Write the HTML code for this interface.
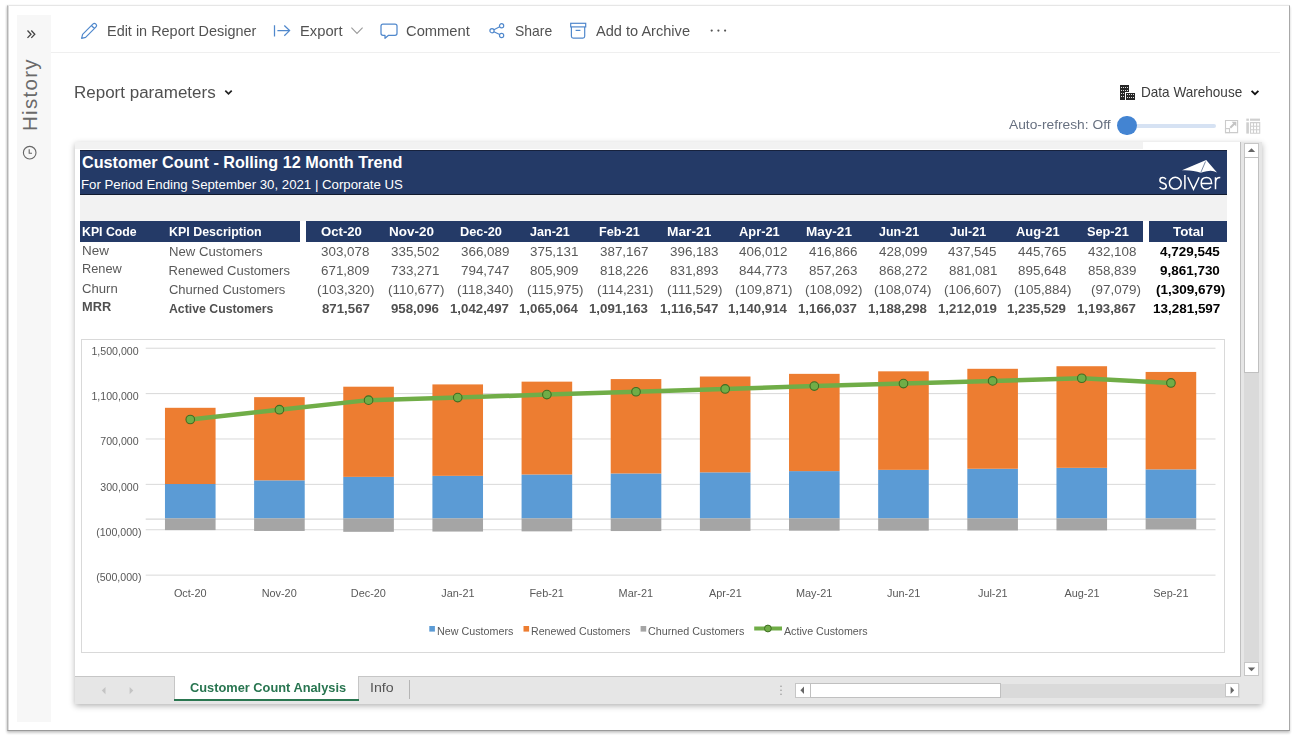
<!DOCTYPE html>
<html><head><meta charset="utf-8"><style>
html,body{margin:0;padding:0;}
body{width:1297px;height:741px;overflow:hidden;position:relative;background:#fff;font-family:"Liberation Sans",sans-serif;}
.t{position:absolute;white-space:nowrap;line-height:1;transform-origin:0 0;}
.r{position:absolute;}
#wrap{position:absolute;left:0;top:0;width:1297px;height:741px;overflow:hidden;opacity:0.999;will-change:opacity;}
</style></head><body>
<div id="wrap"><div class="r" style="left:7px;top:5px;width:1281px;height:724px;background:#fff;border-top:1px solid #e6e6e6;border-left:1px solid #b5b5b5;border-right:1px solid #a8a8a8;border-bottom:1px solid #9a9a9a;box-shadow:0 1.5px 2.5px rgba(0,0,0,0.22), -1px 0 2px rgba(0,0,0,0.08);"></div>
<div class="r" style="left:17px;top:15px;width:34px;height:707px;background:#f7f7f7;"></div>
<div class="r" style="left:8px;top:6px;width:1px;height:724px;background:#dcdcdc;"></div>
<div class="r" style="left:51px;top:52px;width:1229px;height:1px;background:#efefef;"></div>
<svg class="r" style="left:26px;top:29px" width="11" height="11" viewBox="0 0 11 11"><path d="M1.5 1.5 L5 5.2 L1.5 8.9 M5.3 1.5 L8.8 5.2 L5.3 8.9" fill="none" stroke="#444" stroke-width="1.3"/></svg>
<div class="t" style="left:19.85px;top:130.84px;font-size:20.5px;letter-spacing:1.3px;color:#6a6a6a;transform-origin:0 0;transform:rotate(-90deg);">History</div>
<svg class="r" style="left:22px;top:145px" width="16" height="16" viewBox="0 0 16 16"><circle cx="7.7" cy="7.7" r="6.3" fill="none" stroke="#666" stroke-width="1.1"/><path d="M7.2 4.2 V8.3 H10" fill="none" stroke="#666" stroke-width="1.1"/></svg>
<svg class="r" style="left:80px;top:22px" width="19" height="18" viewBox="0 0 19 18"><path d="M1.6 16.4 L2.6 12.3 L12.8 2.1 Q14.4 0.6 15.9 2.1 Q17.3 3.6 15.8 5.1 L5.6 15.3 Z M11.4 3.5 L14.4 6.5" fill="none" stroke="#5088cc" stroke-width="1.2" stroke-linejoin="round"/></svg>
<div class="t" style="left:106.84px;top:23.98px;font-size:14.2px;color:#525252;transform:scaleX(1.0178);">Edit in Report Designer</div>
<svg class="r" style="left:272px;top:23px" width="20" height="16" viewBox="0 0 20 16"><path d="M2.5 2.3 V13.6 M5.4 7.6 H17.6 M12.3 2.5 L17.6 7.6 L12.3 12.8" fill="none" stroke="#5088cc" stroke-width="1.25"/></svg>
<div class="t" style="left:300.02px;top:23.98px;font-size:14.2px;color:#525252;transform:scaleX(1.0387);">Export</div>
<svg class="r" style="left:350px;top:26px" width="14" height="9" viewBox="0 0 14 9"><path d="M1.4 1.6 L7 7.4 L12.6 1.6" fill="none" stroke="#9a9a9a" stroke-width="1.1"/></svg>
<svg class="r" style="left:379px;top:22px" width="20" height="18" viewBox="0 0 20 18"><path d="M4 2 H16 Q18 2 18 4 V11.3 Q18 13.3 16 13.3 H9.6 L6 16.3 V13.3 H4 Q2 13.3 2 11.3 V4 Q2 2 4 2 Z" fill="none" stroke="#5088cc" stroke-width="1.25" stroke-linejoin="round"/></svg>
<div class="t" style="left:406.46px;top:23.88px;font-size:14.2px;color:#525252;transform:scaleX(1.0378);">Comment</div>
<svg class="r" style="left:487px;top:21px" width="18" height="18" viewBox="0 0 18 18"><circle cx="5" cy="9.7" r="2.1" fill="none" stroke="#5088cc" stroke-width="1.2"/><circle cx="14.6" cy="4.8" r="2.1" fill="none" stroke="#5088cc" stroke-width="1.2"/><circle cx="14.6" cy="14.5" r="2.1" fill="none" stroke="#5088cc" stroke-width="1.2"/><path d="M6.9 8.7 L12.7 5.8 M6.9 10.7 L12.7 13.5" stroke="#5088cc" stroke-width="1.2"/></svg>
<div class="t" style="left:514.97px;top:23.88px;font-size:14.2px;color:#525252;transform:scaleX(0.9818);">Share</div>
<svg class="r" style="left:568px;top:21px" width="20" height="19" viewBox="0 0 20 19"><rect x="2.7" y="2.3" width="15" height="3.6" fill="none" stroke="#5088cc" stroke-width="1.2"/><path d="M3.4 5.9 V15.3 Q3.4 17.1 5.2 17.1 H14.9 Q16.7 17.1 16.7 15.3 V5.9" fill="none" stroke="#5088cc" stroke-width="1.2"/><path d="M7.6 9.4 H12.4" stroke="#5088cc" stroke-width="1.2"/></svg>
<div class="t" style="left:596.33px;top:23.98px;font-size:14.2px;color:#525252;transform:scaleX(1.0274);">Add to Archive</div>
<svg class="r" style="left:708px;top:27px" width="22" height="8" viewBox="0 0 22 8"><circle cx="3.7" cy="3.6" r="1.1" fill="#555"/><circle cx="10.4" cy="3.6" r="1.1" fill="#555"/><circle cx="17.1" cy="3.6" r="1.1" fill="#555"/></svg>
<div class="t" style="left:74.34px;top:84.82px;font-size:15.8px;color:#505050;transform:scaleX(1.0756);">Report parameters</div>
<svg class="r" style="left:223px;top:88px" width="11" height="9" viewBox="0 0 11 9"><path d="M2.3 2.6 L5.5 5.8 L8.7 2.6" fill="none" stroke="#222" stroke-width="1.7"/></svg>
<svg class="r" style="left:1119px;top:85px" width="17" height="16" viewBox="0 0 17 16" shape-rendering="crispEdges"><rect x="1" y="0" width="9" height="15" fill="#262626"/><rect x="2" y="2" width="1" height="1.4" fill="#ddd"/><rect x="2" y="5" width="1" height="1.4" fill="#ddd"/><rect x="2" y="8" width="1" height="1.4" fill="#ddd"/><rect x="2" y="11" width="1" height="1.4" fill="#ddd"/><rect x="4" y="2" width="1" height="1.4" fill="#ddd"/><rect x="4" y="5" width="1" height="1.4" fill="#ddd"/><rect x="4" y="8" width="1" height="1.4" fill="#ddd"/><rect x="4" y="11" width="1" height="1.4" fill="#ddd"/><rect x="6" y="2" width="1" height="1.4" fill="#ddd"/><rect x="6" y="5" width="1" height="1.4" fill="#ddd"/><rect x="6" y="8" width="1" height="1.4" fill="#ddd"/><rect x="6" y="11" width="1" height="1.4" fill="#ddd"/><rect x="8" y="2" width="1" height="1.4" fill="#ddd"/><rect x="8" y="5" width="1" height="1.4" fill="#ddd"/><rect x="8" y="8" width="1" height="1.4" fill="#ddd"/><rect x="8" y="11" width="1" height="1.4" fill="#ddd"/><rect x="6" y="7" width="10" height="8" fill="#fff"/><rect x="7" y="8" width="9" height="7" fill="#262626"/><rect x="8" y="9" width="1" height="1.4" fill="#ddd"/><rect x="8" y="12" width="1" height="1.4" fill="#ddd"/><rect x="10" y="9" width="1" height="1.4" fill="#ddd"/><rect x="10" y="12" width="1" height="1.4" fill="#ddd"/><rect x="12" y="9" width="1" height="1.4" fill="#ddd"/><rect x="12" y="12" width="1" height="1.4" fill="#ddd"/><rect x="14" y="9" width="1" height="1.4" fill="#ddd"/><rect x="14" y="12" width="1" height="1.4" fill="#ddd"/></svg>
<div class="t" style="left:1141.12px;top:85.02px;font-size:14.5px;color:#3d3d3d;transform:scaleX(0.9349);">Data Warehouse</div>
<svg class="r" style="left:1249px;top:88px" width="12" height="9" viewBox="0 0 12 9"><path d="M2.6 2.8 L6 6.2 L9.4 2.8" fill="none" stroke="#111" stroke-width="1.8"/></svg>
<div class="t" style="left:1008.53px;top:118.17px;font-size:13.5px;color:#677080;transform:scaleX(1.0202);">Auto-refresh: Off</div>
<div class="r" style="left:1127px;top:123.5px;width:89px;height:4.0px;background:#d6e2f3;border-radius:2px;"></div>
<div class="r" style="left:1117px;top:115.6px;width:19.6px;height:19.6px;border-radius:50%;background:#4384d2;"></div>
<svg class="r" style="left:1224px;top:119px" width="16" height="16" viewBox="0 0 16 16"><path d="M1.5 1.5 H13.6 V13.6 H1.5 Z" fill="none" stroke="#cbcbcb" stroke-width="1.1"/><rect x="1.5" y="9.6" width="4" height="4" fill="none" stroke="#cbcbcb" stroke-width="1.1"/><path d="M6.3 8.8 L10.8 4.3" stroke="#c4c4c4" stroke-width="2"/><path d="M7.6 2.8 H12.3 V7.5 Z" fill="#c4c4c4"/></svg>
<svg class="r" style="left:1245px;top:118px" width="17" height="17" viewBox="0 0 17 17"><rect x="1.3" y="4.3" width="2.6" height="11.3" fill="#cfcfcf"/><rect x="1.3" y="0.6" width="2.6" height="2.2" fill="#cfcfcf"/><rect x="5.0" y="0.6" width="10" height="2.2" fill="#cfcfcf"/><path d="M5.5 4.6 H14.7 V15.3 H5.5 Z M5.5 8.2 H14.7 M5.5 11.7 H14.7 M8.5 4.6 V15.3 M11.6 4.6 V15.3" fill="none" stroke="#cfcfcf" stroke-width="1.1"/></svg>
<div class="r" style="left:74.5px;top:142px;width:1187.5px;height:562px;background:#fff;box-shadow:0 1.5px 6px rgba(0,0,0,0.30);"></div>
<div class="r" style="left:75px;top:142px;width:1068px;height:6.5px;background:#f2f2f2;"></div>
<div class="r" style="left:80px;top:150px;width:1147px;height:45px;background:#243a67;box-sizing:border-box;border-top:1px solid #17223d;border-bottom:1px solid #111a2e;"></div>
<div class="t" style="left:81.65px;top:154.20px;font-size:16.3px;color:#fff;font-weight:bold;transform:scaleX(0.9949);">Customer Count - Rolling 12 Month Trend</div>
<div class="t" style="left:81.24px;top:177.91px;font-size:13.1px;color:#fff;transform:scaleX(1.0105);">For Period Ending September 30, 2021 | Corporate US</div>
<svg class="r" style="left:1150px;top:152px" width="80" height="42" viewBox="1150 152 80 42"><path d="M1182 170.3 L1206.2 160 L1217 172.4 Q1212 169.6 1206.5 171.3 Q1203 172 1200.8 172.8 Q1193 169.8 1182 170.3 Z" fill="#fff"/><path d="M1205.5 161.5 L1200.8 172.5" stroke="#203764" stroke-width="0.6"/><g fill="none" stroke="#fff" stroke-width="1.5"><path d="M1166 179.2 Q1164.6 177.6 1162.8 177.6 Q1159.9 177.6 1159.9 180.2 Q1159.9 182.2 1163 183 Q1166.3 183.9 1166.3 186.3 Q1166.3 188.9 1163 188.9 Q1160.8 188.9 1159.6 187.1"/><circle cx="1175.3" cy="183.2" r="5.9"/><path d="M1184.9 175.1 V189.3"/><path d="M1187.8 177.3 L1193.5 189.2 L1199.1 177.3"/><path d="M1201.3 183.4 H1211.6 Q1211.6 177.6 1206.5 177.6 Q1201.2 177.6 1201.2 183.2 Q1201.2 188.9 1206.5 188.9 Q1209.4 188.9 1211 186.6"/><path d="M1215.5 177.2 V189.3 M1215.5 182.8 Q1215.5 177.6 1220.3 177.6"/></g></svg>
<div class="r" style="left:80px;top:195px;width:1147px;height:26px;background:#f2f2f2;"></div>
<div class="r" style="left:80px;top:221px;width:220px;height:21px;background:#243a67;"></div>
<div class="r" style="left:306px;top:221px;width:837px;height:21px;background:#243a67;"></div>
<div class="r" style="left:1149px;top:221px;width:78px;height:21px;background:#243a67;"></div>
<div class="t" style="left:81.50px;top:225.19px;font-size:13px;color:#fff;font-weight:bold;transform:scaleX(0.9454);">KPI Code</div>
<div class="t" style="left:168.59px;top:224.79px;font-size:13px;color:#fff;font-weight:bold;transform:scaleX(0.9563);">KPI Description</div>
<div class="t" style="left:321.07px;top:224.79px;font-size:13px;color:#fff;font-weight:bold;transform:scaleX(1.0104);">Oct-20</div>
<div class="t" style="left:388.87px;top:224.79px;font-size:13px;color:#fff;font-weight:bold;transform:scaleX(1.0360);">Nov-20</div>
<div class="t" style="left:460.17px;top:224.79px;font-size:13px;color:#fff;font-weight:bold;transform:scaleX(0.9836);">Dec-20</div>
<div class="t" style="left:530.46px;top:224.79px;font-size:13px;color:#fff;font-weight:bold;transform:scaleX(0.9674);">Jan-21</div>
<div class="t" style="left:599.43px;top:224.79px;font-size:13px;color:#fff;font-weight:bold;transform:scaleX(0.9708);">Feb-21</div>
<div class="t" style="left:667.26px;top:224.79px;font-size:13px;color:#fff;font-weight:bold;transform:scaleX(1.0575);">Mar-21</div>
<div class="t" style="left:738.83px;top:224.79px;font-size:13px;color:#fff;font-weight:bold;transform:scaleX(0.9902);">Apr-21</div>
<div class="t" style="left:806.07px;top:224.79px;font-size:13px;color:#fff;font-weight:bold;transform:scaleX(1.0420);">May-21</div>
<div class="t" style="left:878.91px;top:224.79px;font-size:13px;color:#fff;font-weight:bold;transform:scaleX(0.9579);">Jun-21</div>
<div class="t" style="left:950.21px;top:224.79px;font-size:13px;color:#fff;font-weight:bold;transform:scaleX(0.9609);">Jul-21</div>
<div class="t" style="left:1016.48px;top:224.79px;font-size:13px;color:#fff;font-weight:bold;transform:scaleX(0.9903);">Aug-21</div>
<div class="t" style="left:1087.07px;top:224.79px;font-size:13px;color:#fff;font-weight:bold;transform:scaleX(0.9803);">Sep-21</div>
<div class="t" style="left:1173.07px;top:224.79px;font-size:13px;color:#fff;font-weight:bold;transform:scaleX(1.0279);">Total</div>
<div class="t" style="left:81.82px;top:243.59px;font-size:13px;color:#595959;transform:scaleX(1.0350);">New</div>
<div class="t" style="left:81.88px;top:262.49px;font-size:13px;color:#595959;transform:scaleX(0.9834);">Renew</div>
<div class="t" style="left:82.24px;top:281.59px;font-size:13px;color:#595959;transform:scaleX(1.0080);">Churn</div>
<div class="t" style="left:82.07px;top:300.49px;font-size:13px;color:#505050;font-weight:bold;transform:scaleX(0.9835);">MRR</div>
<div class="t" style="left:168.55px;top:244.99px;font-size:13px;color:#595959;transform:scaleX(1.0110);">New Customers</div>
<div class="t" style="left:168.56px;top:263.99px;font-size:13px;color:#595959;">Renewed Customers</div>
<div class="t" style="left:168.95px;top:282.99px;font-size:13px;color:#595959;">Churned Customers</div>
<div class="t" style="left:169.29px;top:301.59px;font-size:13px;color:#505050;font-weight:bold;transform:scaleX(0.9448);">Active Customers</div>
<div class="t" style="left:321.13px;top:245.19px;font-size:13px;color:#595959;transform:scaleX(1.0300);">303,078</div>
<div class="t" style="left:321.20px;top:264.09px;font-size:13px;color:#595959;transform:scaleX(1.0300);">671,809</div>
<div class="t" style="left:316.83px;top:283.09px;font-size:13px;color:#595959;transform:scaleX(1.0330);">(103,320)</div>
<div class="t" style="left:321.60px;top:301.79px;font-size:13px;color:#505050;font-weight:bold;transform:scaleX(1.0200);">871,567</div>
<div class="t" style="left:390.96px;top:245.19px;font-size:13px;color:#595959;transform:scaleX(1.0300);">335,502</div>
<div class="t" style="left:390.90px;top:264.09px;font-size:13px;color:#595959;transform:scaleX(1.0300);">733,271</div>
<div class="t" style="left:387.54px;top:283.09px;font-size:13px;color:#595959;transform:scaleX(1.0330);">(110,677)</div>
<div class="t" style="left:391.23px;top:301.79px;font-size:13px;color:#505050;font-weight:bold;transform:scaleX(1.0200);">958,096</div>
<div class="t" style="left:460.60px;top:245.19px;font-size:13px;color:#595959;transform:scaleX(1.0300);">366,089</div>
<div class="t" style="left:460.66px;top:264.09px;font-size:13px;color:#595959;transform:scaleX(1.0300);">794,747</div>
<div class="t" style="left:457.24px;top:283.09px;font-size:13px;color:#595959;transform:scaleX(1.0330);">(118,340)</div>
<div class="t" style="left:449.92px;top:301.79px;font-size:13px;color:#505050;font-weight:bold;transform:scaleX(1.0200);">1,042,497</div>
<div class="t" style="left:530.30px;top:245.19px;font-size:13px;color:#595959;transform:scaleX(1.0300);">375,131</div>
<div class="t" style="left:530.30px;top:264.09px;font-size:13px;color:#595959;transform:scaleX(1.0300);">805,909</div>
<div class="t" style="left:526.94px;top:283.09px;font-size:13px;color:#595959;transform:scaleX(1.0330);">(115,975)</div>
<div class="t" style="left:519.16px;top:301.79px;font-size:13px;color:#505050;font-weight:bold;transform:scaleX(1.0200);">1,065,064</div>
<div class="t" style="left:600.06px;top:245.19px;font-size:13px;color:#595959;transform:scaleX(1.0300);">387,167</div>
<div class="t" style="left:600.00px;top:264.09px;font-size:13px;color:#595959;transform:scaleX(1.0300);">818,226</div>
<div class="t" style="left:596.64px;top:283.09px;font-size:13px;color:#595959;transform:scaleX(1.0330);">(114,231)</div>
<div class="t" style="left:589.26px;top:301.79px;font-size:13px;color:#505050;font-weight:bold;transform:scaleX(1.0200);">1,091,163</div>
<div class="t" style="left:669.70px;top:245.19px;font-size:13px;color:#595959;transform:scaleX(1.0300);">396,183</div>
<div class="t" style="left:669.70px;top:264.09px;font-size:13px;color:#595959;transform:scaleX(1.0300);">831,893</div>
<div class="t" style="left:667.34px;top:283.09px;font-size:13px;color:#595959;transform:scaleX(1.0330);">(111,529)</div>
<div class="t" style="left:659.75px;top:301.79px;font-size:13px;color:#505050;font-weight:bold;transform:scaleX(1.0200);">1,116,547</div>
<div class="t" style="left:739.46px;top:245.19px;font-size:13px;color:#595959;transform:scaleX(1.0300);">406,012</div>
<div class="t" style="left:739.40px;top:264.09px;font-size:13px;color:#595959;transform:scaleX(1.0300);">844,773</div>
<div class="t" style="left:735.03px;top:283.09px;font-size:13px;color:#595959;transform:scaleX(1.0330);">(109,871)</div>
<div class="t" style="left:728.26px;top:301.79px;font-size:13px;color:#505050;font-weight:bold;transform:scaleX(1.0200);">1,140,914</div>
<div class="t" style="left:809.10px;top:245.19px;font-size:13px;color:#595959;transform:scaleX(1.0300);">416,866</div>
<div class="t" style="left:809.10px;top:264.09px;font-size:13px;color:#595959;transform:scaleX(1.0300);">857,263</div>
<div class="t" style="left:804.73px;top:283.09px;font-size:13px;color:#595959;transform:scaleX(1.0330);">(108,092)</div>
<div class="t" style="left:798.42px;top:301.79px;font-size:13px;color:#505050;font-weight:bold;transform:scaleX(1.0200);">1,166,037</div>
<div class="t" style="left:878.80px;top:245.19px;font-size:13px;color:#595959;transform:scaleX(1.0300);">428,099</div>
<div class="t" style="left:878.86px;top:264.09px;font-size:13px;color:#595959;transform:scaleX(1.0300);">868,272</div>
<div class="t" style="left:874.43px;top:283.09px;font-size:13px;color:#595959;transform:scaleX(1.0330);">(108,074)</div>
<div class="t" style="left:867.99px;top:301.79px;font-size:13px;color:#505050;font-weight:bold;transform:scaleX(1.0200);">1,188,298</div>
<div class="t" style="left:948.43px;top:245.19px;font-size:13px;color:#595959;transform:scaleX(1.0300);">437,545</div>
<div class="t" style="left:948.50px;top:264.09px;font-size:13px;color:#595959;transform:scaleX(1.0300);">881,081</div>
<div class="t" style="left:944.13px;top:283.09px;font-size:13px;color:#595959;transform:scaleX(1.0330);">(106,607)</div>
<div class="t" style="left:937.76px;top:301.79px;font-size:13px;color:#505050;font-weight:bold;transform:scaleX(1.0200);">1,212,019</div>
<div class="t" style="left:1018.13px;top:245.19px;font-size:13px;color:#595959;transform:scaleX(1.0300);">445,765</div>
<div class="t" style="left:1018.13px;top:264.09px;font-size:13px;color:#595959;transform:scaleX(1.0300);">895,648</div>
<div class="t" style="left:1013.83px;top:283.09px;font-size:13px;color:#595959;transform:scaleX(1.0330);">(105,884)</div>
<div class="t" style="left:1007.46px;top:301.79px;font-size:13px;color:#505050;font-weight:bold;transform:scaleX(1.0200);">1,235,529</div>
<div class="t" style="left:1087.83px;top:245.19px;font-size:13px;color:#595959;transform:scaleX(1.0300);">432,108</div>
<div class="t" style="left:1087.90px;top:264.09px;font-size:13px;color:#595959;transform:scaleX(1.0300);">858,839</div>
<div class="t" style="left:1091.05px;top:283.09px;font-size:13px;color:#595959;transform:scaleX(1.0330);">(97,079)</div>
<div class="t" style="left:1077.22px;top:301.79px;font-size:13px;color:#505050;font-weight:bold;transform:scaleX(1.0200);">1,193,867</div>
<div class="t" style="left:1159.76px;top:245.19px;font-size:13px;color:#000;font-weight:bold;transform:scaleX(1.0350);">4,729,545</div>
<div class="t" style="left:1159.96px;top:264.09px;font-size:13px;color:#000;font-weight:bold;transform:scaleX(1.0350);">9,861,730</div>
<div class="t" style="left:1155.52px;top:283.09px;font-size:13px;color:#000;font-weight:bold;transform:scaleX(1.0400);">(1,309,679)</div>
<div class="t" style="left:1152.50px;top:301.79px;font-size:13px;color:#000;font-weight:bold;transform:scaleX(1.0350);">13,281,597</div>
<div class="r" style="left:81px;top:338.5px;width:1144px;height:314.5px;box-sizing:border-box;border:1px solid #d9d9d9;"></div>
<svg class="r" style="left:0;top:0" width="1297" height="741" viewBox="0 0 1297 741"><rect x="145.7" y="347.72" width="1069.8" height="1" fill="#d9d9d9"/><rect x="145.7" y="393.10" width="1069.8" height="1" fill="#d9d9d9"/><rect x="145.7" y="438.48" width="1069.8" height="1" fill="#d9d9d9"/><rect x="145.7" y="483.86" width="1069.8" height="1" fill="#d9d9d9"/><rect x="145.7" y="529.25" width="1069.8" height="1" fill="#d9d9d9"/><rect x="145.7" y="574.62" width="1069.8" height="1" fill="#d9d9d9"/><rect x="145.7" y="518.6" width="1069.8" height="1" fill="#cdcdcd"/><rect x="164.97" y="484.02" width="50.6" height="34.38" fill="#5b9bd5"/><rect x="164.97" y="407.80" width="50.6" height="76.22" fill="#ed7d31"/><rect x="164.97" y="518.40" width="50.6" height="11.72" fill="#a5a5a5"/><rect x="254.12" y="480.34" width="50.6" height="38.06" fill="#5b9bd5"/><rect x="254.12" y="397.15" width="50.6" height="83.19" fill="#ed7d31"/><rect x="254.12" y="518.40" width="50.6" height="12.56" fill="#a5a5a5"/><rect x="343.27" y="476.87" width="50.6" height="41.53" fill="#5b9bd5"/><rect x="343.27" y="386.70" width="50.6" height="90.16" fill="#ed7d31"/><rect x="343.27" y="518.40" width="50.6" height="13.43" fill="#a5a5a5"/><rect x="432.42" y="475.84" width="50.6" height="42.56" fill="#5b9bd5"/><rect x="432.42" y="384.41" width="50.6" height="91.43" fill="#ed7d31"/><rect x="432.42" y="518.40" width="50.6" height="13.16" fill="#a5a5a5"/><rect x="521.58" y="474.48" width="50.6" height="43.92" fill="#5b9bd5"/><rect x="521.58" y="381.65" width="50.6" height="92.83" fill="#ed7d31"/><rect x="521.58" y="518.40" width="50.6" height="12.96" fill="#a5a5a5"/><rect x="610.72" y="473.45" width="50.6" height="44.95" fill="#5b9bd5"/><rect x="610.72" y="379.07" width="50.6" height="94.38" fill="#ed7d31"/><rect x="610.72" y="518.40" width="50.6" height="12.65" fill="#a5a5a5"/><rect x="699.88" y="472.34" width="50.6" height="46.06" fill="#5b9bd5"/><rect x="699.88" y="376.50" width="50.6" height="95.84" fill="#ed7d31"/><rect x="699.88" y="518.40" width="50.6" height="12.46" fill="#a5a5a5"/><rect x="789.02" y="471.11" width="50.6" height="47.29" fill="#5b9bd5"/><rect x="789.02" y="373.85" width="50.6" height="97.26" fill="#ed7d31"/><rect x="789.02" y="518.40" width="50.6" height="12.26" fill="#a5a5a5"/><rect x="878.17" y="469.83" width="50.6" height="48.57" fill="#5b9bd5"/><rect x="878.17" y="371.33" width="50.6" height="98.51" fill="#ed7d31"/><rect x="878.17" y="518.40" width="50.6" height="12.26" fill="#a5a5a5"/><rect x="967.32" y="468.76" width="50.6" height="49.64" fill="#5b9bd5"/><rect x="967.32" y="368.80" width="50.6" height="99.96" fill="#ed7d31"/><rect x="967.32" y="518.40" width="50.6" height="12.09" fill="#a5a5a5"/><rect x="1056.47" y="467.83" width="50.6" height="50.57" fill="#5b9bd5"/><rect x="1056.47" y="366.22" width="50.6" height="101.61" fill="#ed7d31"/><rect x="1056.47" y="518.40" width="50.6" height="12.01" fill="#a5a5a5"/><rect x="1145.62" y="469.38" width="50.6" height="49.02" fill="#5b9bd5"/><rect x="1145.62" y="371.94" width="50.6" height="97.44" fill="#ed7d31"/><rect x="1145.62" y="518.40" width="50.6" height="11.01" fill="#a5a5a5"/><polyline points="190.27,419.52 279.42,409.70 368.57,400.13 457.72,397.57 546.88,394.61 636.02,391.73 725.17,388.96 814.32,386.11 903.47,383.59 992.62,380.90 1081.77,378.23 1170.92,382.96" fill="none" stroke="#70ad47" stroke-width="4.5" stroke-linejoin="round" stroke-linecap="round"/><circle cx="190.27" cy="419.52" r="4.3" fill="#70ad47" stroke="#3f6e23" stroke-width="1.1"/><circle cx="279.42" cy="409.70" r="4.3" fill="#70ad47" stroke="#3f6e23" stroke-width="1.1"/><circle cx="368.57" cy="400.13" r="4.3" fill="#70ad47" stroke="#3f6e23" stroke-width="1.1"/><circle cx="457.72" cy="397.57" r="4.3" fill="#70ad47" stroke="#3f6e23" stroke-width="1.1"/><circle cx="546.88" cy="394.61" r="4.3" fill="#70ad47" stroke="#3f6e23" stroke-width="1.1"/><circle cx="636.02" cy="391.73" r="4.3" fill="#70ad47" stroke="#3f6e23" stroke-width="1.1"/><circle cx="725.17" cy="388.96" r="4.3" fill="#70ad47" stroke="#3f6e23" stroke-width="1.1"/><circle cx="814.32" cy="386.11" r="4.3" fill="#70ad47" stroke="#3f6e23" stroke-width="1.1"/><circle cx="903.47" cy="383.59" r="4.3" fill="#70ad47" stroke="#3f6e23" stroke-width="1.1"/><circle cx="992.62" cy="380.90" r="4.3" fill="#70ad47" stroke="#3f6e23" stroke-width="1.1"/><circle cx="1081.77" cy="378.23" r="4.3" fill="#70ad47" stroke="#3f6e23" stroke-width="1.1"/><circle cx="1170.92" cy="382.96" r="4.3" fill="#70ad47" stroke="#3f6e23" stroke-width="1.1"/><rect x="429.3" y="626" width="5.6" height="5.6" fill="#5b9bd5"/><rect x="523.5" y="626" width="5.6" height="5.6" fill="#ed7d31"/><rect x="640.6" y="626" width="5.6" height="5.6" fill="#a5a5a5"/><rect x="754.2" y="626.5" width="27.8" height="4" fill="#70ad47"/><circle cx="767.9" cy="628.5" r="3.4" fill="#70ad47" stroke="#3f6e23" stroke-width="1"/></svg>
<div class="t" style="left:91.45px;top:345.55px;font-size:10.6px;color:#595959;">1,500,000</div>
<div class="t" style="left:91.45px;top:390.93px;font-size:10.6px;color:#595959;">1,100,000</div>
<div class="t" style="left:100.30px;top:436.31px;font-size:10.6px;color:#595959;">700,000</div>
<div class="t" style="left:100.30px;top:481.69px;font-size:10.6px;color:#595959;">300,000</div>
<div class="t" style="left:96.17px;top:526.97px;font-size:10.6px;color:#595959;">(100,000)</div>
<div class="t" style="left:96.17px;top:572.35px;font-size:10.6px;color:#595959;">(500,000)</div>
<div class="t" style="left:173.90px;top:587.67px;font-size:10.9px;color:#595959;">Oct-20</div>
<div class="t" style="left:261.63px;top:587.67px;font-size:10.9px;color:#595959;">Nov-20</div>
<div class="t" style="left:350.78px;top:587.67px;font-size:10.9px;color:#595959;">Dec-20</div>
<div class="t" style="left:441.24px;top:587.67px;font-size:10.9px;color:#595959;">Jan-21</div>
<div class="t" style="left:529.43px;top:587.67px;font-size:10.9px;color:#595959;">Feb-21</div>
<div class="t" style="left:618.58px;top:587.67px;font-size:10.9px;color:#595959;">Mar-21</div>
<div class="t" style="left:709.04px;top:587.67px;font-size:10.9px;color:#595959;">Apr-21</div>
<div class="t" style="left:795.96px;top:587.67px;font-size:10.9px;color:#595959;">May-21</div>
<div class="t" style="left:886.99px;top:587.67px;font-size:10.9px;color:#595959;">Jun-21</div>
<div class="t" style="left:977.94px;top:587.67px;font-size:10.9px;color:#595959;">Jul-21</div>
<div class="t" style="left:1064.42px;top:587.67px;font-size:10.9px;color:#595959;">Aug-21</div>
<div class="t" style="left:1153.35px;top:587.67px;font-size:10.9px;color:#595959;">Sep-21</div>
<div class="t" style="left:436.94px;top:625.57px;font-size:10.9px;color:#595959;transform:scaleX(0.9856);">New Customers</div>
<div class="t" style="left:531.15px;top:625.57px;font-size:10.9px;color:#595959;transform:scaleX(0.9776);">Renewed Customers</div>
<div class="t" style="left:648.16px;top:625.57px;font-size:10.9px;color:#595959;transform:scaleX(0.9883);">Churned Customers</div>
<div class="t" style="left:784.45px;top:625.57px;font-size:10.9px;color:#595959;transform:scaleX(0.9804);">Active Customers</div>
<div class="r" style="left:1240px;top:142px;width:1px;height:535px;background:#bfbfbf;"></div>
<div class="r" style="left:75px;top:676px;width:1166px;height:1px;background:#bfbfbf;"></div>
<div class="r" style="left:1241px;top:142px;width:21px;height:562px;background:#e6e6e6;"></div>
<div class="r" style="left:1244px;top:143px;width:15px;height:533px;background:#dadada;"></div>
<div class="r" style="left:1244px;top:143px;width:15px;height:14.5px;box-sizing:border-box;background:#fff;border:1px solid #c6c6c6;"></div>
<svg class="r" style="left:1244px;top:143px" width="15" height="15" viewBox="0 0 15 15"><path d="M3.8 9 L7.5 5.3 L11.2 9 Z" fill="#666"/></svg>
<div class="r" style="left:1244px;top:157px;width:15px;height:215.5px;box-sizing:border-box;background:#fff;border:1px solid #c0c0c0;"></div>
<div class="r" style="left:1244px;top:661.5px;width:14.5px;height:14px;box-sizing:border-box;background:#fff;border:1px solid #c6c6c6;"></div>
<svg class="r" style="left:1244px;top:661.5px" width="15" height="15" viewBox="0 0 15 15"><path d="M3.8 5.5 L7.5 9.2 L11.2 5.5 Z" fill="#666"/></svg>
<div class="r" style="left:75px;top:677px;width:1187px;height:27px;background:#e6e6e6;"></div>
<div class="r" style="left:75px;top:676px;width:99px;height:1px;background:#c6c6c6;"></div>
<svg class="r" style="left:98px;top:684px" width="40" height="14" viewBox="0 0 40 14"><path d="M7.5 3 L3.8 6.6 L7.5 10.2 Z" fill="#c4c4c4"/><path d="M31.6 3 L35.3 6.6 L31.6 10.2 Z" fill="#c4c4c4"/></svg>
<div class="r" style="left:174px;top:676px;width:185px;height:25px;background:#fff;box-sizing:border-box;border-left:1px solid #c6c6c6;border-right:1px solid #c6c6c6;"></div>
<div class="r" style="left:174px;top:699px;width:185px;height:2px;background:#2a7650;"></div>
<div class="r" style="left:359px;top:676px;width:882px;height:1px;background:#c6c6c6;"></div>
<div class="t" style="left:190.49px;top:681.49px;font-size:13px;color:#287550;font-weight:bold;transform:scaleX(0.9850);">Customer Count Analysis</div>
<div class="t" style="left:369.72px;top:681.49px;font-size:13px;color:#555;transform:scaleX(1.0925);">Info</div>
<div class="r" style="left:409px;top:680px;width:1px;height:19px;background:#b5b5b5;"></div>
<svg class="r" style="left:778px;top:683px" width="6" height="16" viewBox="0 0 6 16"><circle cx="3" cy="3.3" r="0.8" fill="#999"/><circle cx="3" cy="7.3" r="0.8" fill="#999"/><circle cx="3" cy="11.3" r="0.8" fill="#999"/></svg>
<div class="r" style="left:795px;top:683.5px;width:444.5px;height:14.0px;background:#dadada;"></div>
<div class="r" style="left:795px;top:683.3px;width:15.5px;height:14.3px;box-sizing:border-box;background:#fff;border:1px solid #c6c6c6;"></div>
<svg class="r" style="left:795px;top:683px" width="15" height="15" viewBox="0 0 15 15"><path d="M9 3.6 L5.4 7.3 L9 11 Z" fill="#666"/></svg>
<div class="r" style="left:810px;top:683.3px;width:190.5px;height:14.3px;box-sizing:border-box;background:#fff;border:1px solid #c0c0c0;"></div>
<div class="r" style="left:1225.4px;top:683.3px;width:14px;height:14px;box-sizing:border-box;background:#fff;border:1px solid #c6c6c6;"></div>
<svg class="r" style="left:1225px;top:683px" width="15" height="15" viewBox="0 0 15 15"><path d="M5.6 3.6 L9.2 7.3 L5.6 11 Z" fill="#666"/></svg>
</div></body></html>
